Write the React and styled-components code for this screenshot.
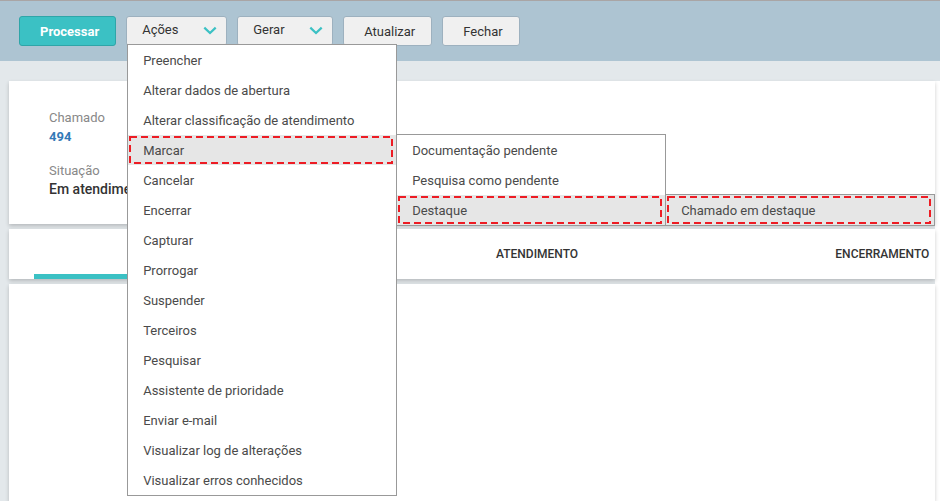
import React from "react";
import styled, { createGlobalStyle, css } from "styled-components";

const colors = {
    teal: "#3bc1c4",
    tealDark: "#2fa5a8",
    bar: "#adc4d2",
    page: "#e3e8eb",
    button: "#f0f0f0",
    buttonBorder: "#9db1bf",
    menuBorder: "#999999",
    hover: "#e6e6e6",
    mark: "#ed1c24",
    text: "#4a4a4a",
    strong: "#333333",
    label: "#888888",
    link: "#337ab7",
};

const GlobalStyle = createGlobalStyle`
    * {
        box-sizing: border-box;
    }

    body {
        margin: 0;
        background: #ffffff;
        color: ${colors.text};
        font-family: Roboto, "Liberation Sans", sans-serif;
        font-size: 13px;
        line-height: 16px;
        overflow: hidden;
    }
`;

const Page = styled.div`
    display: flex;
    flex-direction: column;
    min-height: 100vh;
`;

const Toolbar = styled.header`
    display: flex;
    align-items: flex-start;
    gap: 10px;
    padding: 15px 19px;
    border-top: 1px solid #a9a5a5;
    background: ${colors.bar};
`;

const Button = styled.button`
    display: flex;
    align-items: center;
    justify-content: space-between;
    height: 30px;
    padding: ${(props) => (props.$menu ? "0 9px 2px 15px" : "2px 16px 0 20px")};
    min-width: ${(props) => props.$width || "0"};
    border: 1px solid ${colors.buttonBorder};
    border-radius: 3px;
    background: ${colors.button};
    color: ${colors.strong};
    font: inherit;
    cursor: pointer;

    ${(props) =>
        props.$primary &&
        css`
            border-color: ${colors.tealDark};
            background: ${colors.teal};
            color: #ffffff;
            font-weight: 700;
        `}
`;

const Dropdown = styled.div`
    position: relative;
`;

const Menu = styled.ul`
    position: absolute;
    z-index: 1;
    top: ${(props) => (props.$nested ? "-1px" : "28px")};
    left: ${(props) => (props.$nested ? "100%" : "1px")};
    width: 270px;
    margin: 0;
    padding: 0;
    border: 1px solid ${colors.menuBorder};
    background: #ffffff;
    list-style: none;
`;

const MenuEntry = styled.li`
    position: relative;
`;

const MenuLink = styled.a`
    display: block;
    height: 30px;
    padding: 8px 15px 6px;
    background: ${(props) => (props.$marked ? colors.hover : "transparent")};
    color: ${colors.text};
    text-decoration: none;
`;

const MarkFrame = styled.svg`
    position: absolute;
    top: 1px;
    left: 1px;
    width: calc(100% - 4px);
    height: 28px;
    pointer-events: none;

    rect {
        width: calc(100% - 2px);
        height: 26px;
        fill: none;
        stroke: ${colors.mark};
        stroke-width: 2px;
        stroke-dasharray: 7 4;
    }
`;

const Content = styled.main`
    display: flex;
    flex: 1;
    flex-direction: column;
    gap: 5px;
    margin-right: 5px;
    padding-left: 9px;
    background: ${colors.page};
`;

const Spacer = styled.div`
    height: 20px;
    background: ${colors.page};
`;

const Card = styled.section`
    flex: ${(props) => (props.$fill ? "1" : "none")};
    background: #ffffff;
    box-shadow: 0 2px 4px rgba(0, 0, 0, 0.2);
`;

const Details = styled.dl`
    display: flex;
    flex-direction: column;
    gap: 16px;
    margin: 0;
    padding: 28px 40px 25px;
`;

const Term = styled.dt`
    line-height: 18px;
    color: ${colors.label};
`;

const Value = styled.dd`
    margin: 0;
    line-height: 19px;
    color: ${(props) => (props.$link ? colors.link : colors.strong)};
    font-size: ${(props) => (props.$link ? "13px" : "14px")};
    font-weight: ${(props) => (props.$link ? 700 : 500)};
`;

/* the strip is wider than its card, the last tab runs off the edge */
const Tabs = styled.nav`
    display: grid;
    grid-template-columns: repeat(3, 35%);
    column-gap: 30px;
    margin-left: 25px;
    overflow: hidden;
`;

const Tab = styled.a`
    height: 50px;
    padding-top: 17px;
    border-bottom: 5px solid ${(props) => (props.$active ? colors.teal : "transparent")};
    color: ${colors.strong};
    font-size: 12px;
    font-weight: 500;
    text-align: center;
    text-decoration: none;
`;

const actions = [
    { label: "Preencher" },
    { label: "Alterar dados de abertura" },
    { label: "Alterar classificação de atendimento" },
    {
        label: "Marcar",
        items: [
            { label: "Documentação pendente" },
            { label: "Pesquisa como pendente" },
            {
                label: "Destaque",
                items: [{ label: "Chamado em destaque", marked: true }],
            },
        ],
    },
    { label: "Cancelar" },
    { label: "Encerrar" },
    { label: "Capturar" },
    { label: "Prorrogar" },
    { label: "Suspender" },
    { label: "Terceiros" },
    { label: "Pesquisar" },
    { label: "Assistente de prioridade" },
    { label: "Enviar e-mail" },
    { label: "Visualizar log de alterações" },
    { label: "Visualizar erros conhecidos" },
];

const Chevron = () => (
    <svg width="14" height="10" viewBox="0 0 14 10" aria-hidden="true">
        <path d="M1.3 2.6 L7 8 L12.7 2.6" fill="none" stroke={colors.teal} strokeWidth="2.2" />
    </svg>
);

const ActionMenu = ({ items, nested }) => (
    <Menu $nested={nested}>
        {items.map((item) => {
            const marked = item.marked || Boolean(item.items);
            return (
                <MenuEntry key={item.label}>
                    <MenuLink href="#" $marked={marked}>
                        {item.label}
                    </MenuLink>
                    {marked && (
                        <MarkFrame aria-hidden="true">
                            <rect x="1" y="1" />
                        </MarkFrame>
                    )}
                    {item.items && <ActionMenu items={item.items} nested />}
                </MenuEntry>
            );
        })}
    </Menu>
);

const App = () => (
    <>
        <GlobalStyle />
        <Page>
            <Toolbar>
                <Button $primary>Processar</Button>
                <Dropdown>
                    <Button $menu $width="101px" aria-expanded="true">
                        Ações
                        <Chevron />
                    </Button>
                    <ActionMenu items={actions} />
                </Dropdown>
                <Button $menu $width="96px">
                    Gerar
                    <Chevron />
                </Button>
                <Button>Atualizar</Button>
                <Button>Fechar</Button>
            </Toolbar>
            <Spacer />
            <Content>
                <Card>
                    <Details>
                        <div>
                            <Term>Chamado</Term>
                            <Value $link>494</Value>
                        </div>
                        <div>
                            <Term>Situação</Term>
                            <Value>Em atendimento</Value>
                        </div>
                    </Details>
                </Card>
                <Card>
                    <Tabs>
                        <Tab href="#" $active>
                            ABERTURA
                        </Tab>
                        <Tab href="#">ATENDIMENTO</Tab>
                        <Tab href="#">ENCERRAMENTO</Tab>
                    </Tabs>
                </Card>
                <Card $fill />
            </Content>
        </Page>
    </>
);

export default App;
